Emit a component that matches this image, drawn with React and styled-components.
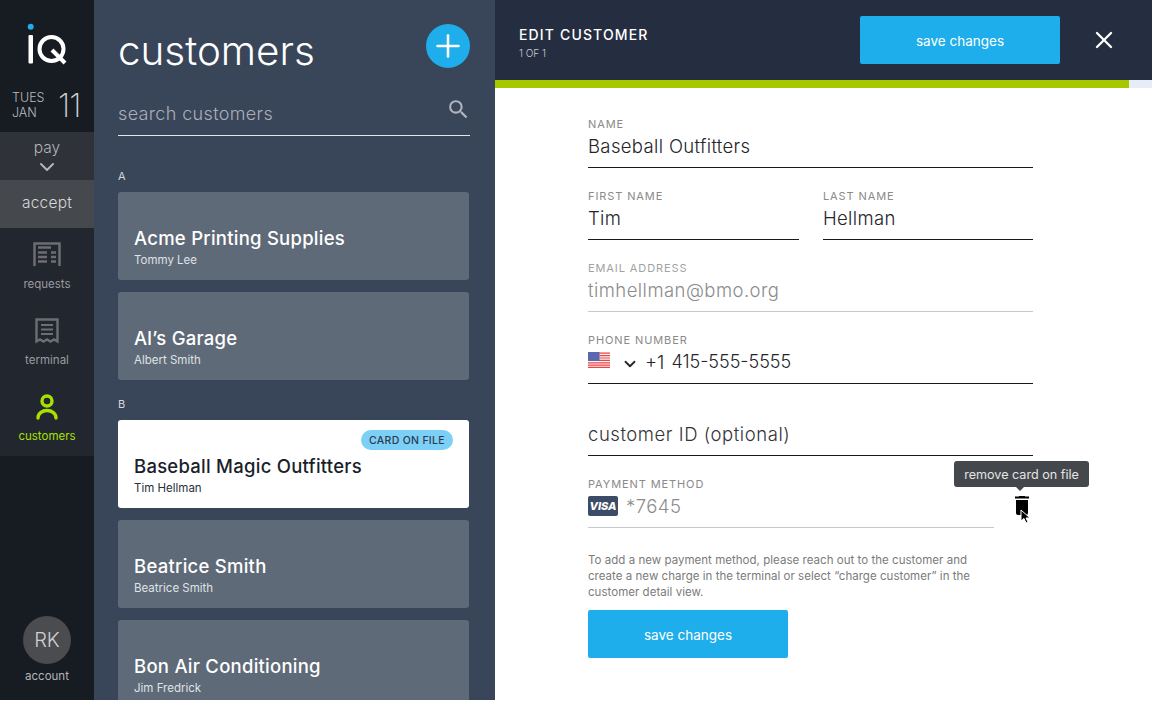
import React from "react"
import styled, { createGlobalStyle } from "styled-components"
import { Plus, X, ChevronDown } from "lucide-react"
import { MdSearch } from "react-icons/md"

const GlobalStyle = createGlobalStyle`
    html, body {
        margin: 0;
        padding: 0;
        background: #fff;
        font-family: "Inter", "Open Sans", sans-serif;
    }
    * { box-sizing: border-box; }
`

const Page = styled.div`
    display: flex;
    width: 1152px;
    height: 700px;
    overflow: hidden;
`

const Sidebar = styled.nav`
    width: 94px;
    flex: none;
    display: flex;
    flex-direction: column;
    background: #171b22;
    color: #b9babd;
`

const LogoBox = styled.div`
    height: 132px;
    display: flex;
    flex-direction: column;
`

const DateRow = styled.div`
    display: flex;
    align-items: center;
    padding: 0 0 0 12px;
    margin-top: 14px;
`

const DateText = styled.div`
    font-size: 12.5px;
    line-height: 15px;
    font-weight: 300;
    width: 46px;
`

const DateNum = styled.div`
    font-size: 32px;
    line-height: 36px;
    font-weight: 200;
    letter-spacing: -1px;
    color: #d0d1d3;
    margin-top: 2px;
`

const PayItem = styled.div`
    height: 48px;
    background: #2f3239;
    text-align: center;
    font-size: 15.5px;
    font-weight: 300;
    line-height: 16px;
    padding-top: 8px;
    color: #b4b5b8;
    svg { display: block; margin: -1px auto 0; }
`

const AcceptItem = styled.div`
    height: 48px;
    background: #45484d;
    display: flex;
    align-items: center;
    justify-content: center;
    font-size: 15.5px;
    letter-spacing: 0.2px;
    font-weight: 300;
    color: #d8d8da;
    padding-bottom: 3px;
`

const NavGroup = styled.div`
    height: 228px;
    background: #22262f;
`

const NavItem = styled.div`
    height: 76px;
    display: flex;
    flex-direction: column;
    align-items: center;
    padding-top: 14px;
    font-size: 11.5px;
    color: ${p => (p.$active ? "#a8e000" : "#9a9b9f")};
    svg { height: 26px; display: block; }
    span { margin-top: 9px; line-height: 14px; }
`

const Account = styled.div`
    margin-top: auto;
    padding-bottom: 17px;
    display: flex;
    flex-direction: column;
    align-items: center;
    font-size: 11.5px;
    color: #b4b5b8;
`

const Avatar = styled.div`
    width: 48px;
    height: 48px;
    border-radius: 50%;
    background: #4a4c50;
    display: flex;
    align-items: center;
    justify-content: center;
    font-size: 20px;
    font-weight: 300;
    color: #cfd0d2;
    margin-bottom: 5px;
`

const ListPanel = styled.section`
    width: 401px;
    flex: none;
    background: #394559;
    padding: 0 25px 0 24px;
    overflow: hidden;
`

const ListHead = styled.div`
    display: flex;
    align-items: flex-start;
    justify-content: space-between;
    height: 80px;
    padding-top: 24px;
`

const Title = styled.h1`
    margin: 0;
    font-size: 40.4px;
    line-height: 54px;
    font-weight: 300;
    color: #fff;
`

const AddButton = styled.button`
    width: 44px;
    height: 44px;
    padding: 0;
    border: 0;
    border-radius: 50%;
    background: #1eaeeb;
    color: #fff;
    display: flex;
    align-items: center;
    justify-content: center;
`

const SearchRow = styled.div`
    height: 56px;
    margin-bottom: 28px;
    display: flex;
    align-items: center;
    justify-content: space-between;
    border-bottom: 1px solid #e4e6ea;
    font-size: 18px;
    letter-spacing: 0.35px;
    font-weight: 300;
    color: #a9afb9;
    padding-top: 12px;
    svg { margin: -8px -1px 0 0; }
`

const SectionLabel = styled.div`
    height: 28px;
    padding-top: 4px;
    font-size: 11px;
    line-height: 16px;
    color: #d4d7dc;
`

const Card = styled.div`
    position: relative;
    width: 351px;
    height: 88px;
    margin-bottom: 12px;
    border-radius: 3px;
    padding: 0 16px 12px;
    display: flex;
    flex-direction: column;
    justify-content: flex-end;
    background: ${p => (p.$selected ? "#fff" : "#5f6a78")};
    color: ${p => (p.$selected ? "#1a1f2b" : "#fff")};
`

const CardName = styled.div`
    font-size: 18.5px;
    letter-spacing: 0.25px;
    line-height: 24px;
    font-weight: 500;
`

const CardSub = styled.div`
    font-size: 11.5px;
    line-height: 16px;
    margin-top: 2px;
    color: ${p => (p.$selected ? "#2a2f3a" : "#dfe2e6")};
`

const Badge = styled.div`
    position: absolute;
    top: 10px;
    right: 16px;
    width: 92px;
    height: 20px;
    border-radius: 10px;
    background: #7dd0f5;
    color: #2a3a50;
    font-size: 10.5px;
    font-weight: 500;
    letter-spacing: 0.3px;
    display: flex;
    align-items: center;
    justify-content: center;
`

const Detail = styled.main`
    flex: 1;
    background: #fff;
    min-width: 0;
`

const DetailHead = styled.header`
    height: 80px;
    background: #252e40;
    display: flex;
    align-items: center;
    padding: 0 40px 0 24px;
    color: #fff;
`

const HeadText = styled.div`
    margin-right: auto;
    margin-top: 5px;
`

const HeadTitle = styled.div`
    font-size: 14px;
    line-height: 16px;
    font-weight: 500;
    letter-spacing: 1.15px;
`

const HeadSub = styled.div`
    font-size: 10px;
    line-height: 12px;
    margin-top: 4px;
    font-weight: 300;
    color: #c9ccd2;
`

const SaveButton = styled.button`
    width: 200px;
    height: 48px;
    border: 0;
    border-radius: 2px;
    background: #1eaeeb;
    color: #fff;
    font-family: inherit;
    font-size: 13.5px;
    padding: 2px 0 0;
`

const CloseButton = styled.button`
    width: 16px;
    height: 16px;
    margin-left: 36px;
    padding: 0;
    border: 0;
    background: none;
    color: #fff;
    display: flex;
    align-items: center;
    justify-content: center;
    svg { flex: none; }
`

const Progress = styled.div`
    height: 8px;
    background: #e6edf9;
`

const ProgressFill = styled.div`
    height: 100%;
    background: #a6c800;
`

const Form = styled.form`
    width: 445px;
    margin-left: 93px;
    padding-top: 29px;
    display: flex;
    flex-direction: column;
    gap: 21px;
`

const Field = styled.div`
    min-width: 0;
    height: 51px;
    border-bottom: 1px solid ${p => (p.$muted ? "#c9c9c9" : "#1a1a1a")};
`

const Label = styled.div`
    height: 15px;
    font-size: 11px;
    line-height: 14px;
    letter-spacing: 0.9px;
    color: ${p => (p.$muted ? "#a2a2a2" : "#8a8a8a")};
    margin-bottom: 2px;
`

const Value = styled.div`
    height: 24px;
    display: flex;
    align-items: center;
    font-size: 18.5px;
    letter-spacing: ${p => (p.$hint ? "0.55px" : p.$muted ? "0.45px" : "0.35px")};
    font-weight: ${p => (p.$muted || p.$hint ? 300 : 350)};
    line-height: 24px;
    color: ${p => (p.$muted ? "#8c8c8c" : p.$hint ? "#33353a" : "#23252a")};
`

const TwoCols = styled.div`
    display: grid;
    grid-template-columns: 211px 210px;
    gap: 24px;
`

const Flag = styled.svg`
    width: 22px;
    height: 16px;
    margin-top: -4px;
    margin-right: 11px;
`

const DialCode = styled.span`
    font-weight: 300;
    margin-right: 7px;
    margin-left: 6px;
    letter-spacing: 0;
`

const PhoneNumber = styled.span`
    font-size: 18px;
    letter-spacing: 0;
`

const PaymentRow = styled.div`
    display: flex;
    align-items: flex-start;
`

const PaymentField = styled(Field)`
    width: 406px;
`

const VisaBadge = styled.span`
    width: 30px;
    height: 20px;
    margin-right: 8px;
    border-radius: 2px;
    background: #3d4c66;
    color: #fff;
    font-size: 11px;
    letter-spacing: 0;
    font-weight: 800;
    font-style: italic;
    display: flex;
    align-items: center;
    justify-content: center;
`

const TrashAction = styled.div`
    position: relative;
    width: 14px;
    margin-left: 21px;
    margin-top: 19px;
`

const Tooltip = styled.div`
    position: absolute;
    left: -61px;
    top: -35px;
    width: 135px;
    height: 26px;
    border-radius: 3px;
    background: #44474c;
    color: #e4e4e4;
    font-size: 12.6px;
    white-space: nowrap;
    display: flex;
    align-items: center;
    justify-content: center;
    &::after {
        content: "";
        position: absolute;
        left: 62px;
        bottom: -4px;
        border-left: 4px solid transparent;
        border-right: 4px solid transparent;
        border-top: 4px solid #44474c;
    }
`

const Pointer = styled.svg`
    position: absolute;
    left: 5px;
    top: 13px;
    width: 12px;
    height: 16px;
`

const Note = styled.p`
    margin: 3px 0 0;
    width: 395px;
    font-size: 11.5px;
    letter-spacing: 0.03px;
    line-height: 16px;
    color: #7b7b7b;
`

const BottomSave = styled(SaveButton)`
    margin-top: -11px;
`

const Logo = () => (
    <svg width="94" height="72" viewBox="0 0 94 72" fill="none">
        <circle cx="30.7" cy="26.7" r="3" fill="#1eaeeb" />
        <rect x="28.5" y="35" width="4.5" height="28.5" rx="1" fill="#fff" />
        <circle cx="51.5" cy="49" r="12" stroke="#fff" strokeWidth="4" />
        <path d="M52 50 L65 63" stroke="#fff" strokeWidth="4" />
    </svg>
)

const RequestsIcon = () => (
    <svg width="28" height="26" viewBox="0 0 28 26" fill="none" stroke="#6c6e73">
        <path d="M1.5 24V1.5h25V24" strokeWidth="2.5" />
        <path d="M5 5.5h13M5 10.5h9M5 15h9M5 19.5h9M18 10.5h5M18 15h5M18 19.5h5" strokeWidth="2.4" />
    </svg>
)

const TerminalIcon = () => (
    <svg width="24" height="26" viewBox="0 0 24 26" fill="none" stroke="#6c6e73">
        <path d="M1.5 23.5V1.5h21v22l-3.5-2-3.5 2-3.5-2-3.5 2-3.5-2z" strokeWidth="2.4" />
        <path d="M6 7h12M6 11.5h12M6 16h12" strokeWidth="2.2" />
    </svg>
)

const CustomersIcon = () => (
    <svg width="24" height="26" viewBox="0 0 24 26" fill="none" stroke="#a8e000">
        <circle cx="12" cy="7" r="5" strokeWidth="3.4" />
        <path d="M3 24c0-4.5 4-7.5 9-7.5s9 3 9 7.5" strokeWidth="3.4" strokeLinecap="round" />
    </svg>
)

const UsFlag = () => (
    <Flag viewBox="0 0 22 16">
        <rect width="22" height="16" fill="#f7f7f7" />
        <path d="M0 1.2h22M0 3.6h22M0 6h22M0 8.4h22M0 10.8h22M0 13.2h22M0 15.4h22" stroke="#ee4444" strokeWidth="1.2" />
        <rect width="11.5" height="9" fill="#5a68b0" />
    </Flag>
)

const TrashIcon = () => (
    <svg width="14" height="20" viewBox="0 0 14 20" fill="#000" style={{ display: "block" }}>
        <rect x="0" y="0.5" width="14" height="2" />
        <rect x="4" y="0" width="6" height="1" />
        <path d="M1 4h12v13a2 2 0 0 1-2 2H3a2 2 0 0 1-2-2z" />
    </svg>
)

const groups = [
    {
        letter: "A",
        items: [
            { name: "Acme Printing Supplies", contact: "Tommy Lee" },
            { name: "Al’s Garage", contact: "Albert Smith" },
        ],
    },
    {
        letter: "B",
        items: [
            { name: "Baseball Magic Outfitters", contact: "Tim Hellman", selected: true },
            { name: "Beatrice Smith", contact: "Beatrice Smith" },
            { name: "Bon Air Conditioning", contact: "Jim Fredrick" },
        ],
    },
]

export default function App() {
    return (
        <Page>
            <GlobalStyle />
            <Sidebar>
                <LogoBox>
                    <Logo />
                    <DateRow>
                        <DateText>
                            TUES
                            <br />
                            JAN
                        </DateText>
                        <DateNum>11</DateNum>
                    </DateRow>
                </LogoBox>
                <PayItem>
                    pay
                    <ChevronDown size={24} strokeWidth={2} color="#b4b5b8" />
                </PayItem>
                <AcceptItem>accept</AcceptItem>
                <NavGroup>
                    <NavItem>
                        <RequestsIcon />
                        <span>requests</span>
                    </NavItem>
                    <NavItem>
                        <TerminalIcon />
                        <span>terminal</span>
                    </NavItem>
                    <NavItem $active>
                        <CustomersIcon />
                        <span>customers</span>
                    </NavItem>
                </NavGroup>
                <Account>
                    <Avatar>RK</Avatar>
                    account
                </Account>
            </Sidebar>

            <ListPanel>
                <ListHead>
                    <Title>customers</Title>
                    <AddButton>
                        <Plus size={36} strokeWidth={1.7} />
                    </AddButton>
                </ListHead>
                <SearchRow>
                    search customers
                    <MdSearch size={25} color="#b0b5bd" />
                </SearchRow>
                {groups.map(group => (
                    <div key={group.letter}>
                        <SectionLabel>{group.letter}</SectionLabel>
                        {group.items.map(item => (
                            <Card key={item.name} $selected={item.selected}>
                                {item.selected && <Badge>CARD ON FILE</Badge>}
                                <CardName>{item.name}</CardName>
                                <CardSub $selected={item.selected}>{item.contact}</CardSub>
                            </Card>
                        ))}
                    </div>
                ))}
            </ListPanel>

            <Detail>
                <DetailHead>
                    <HeadText>
                        <HeadTitle>EDIT CUSTOMER</HeadTitle>
                        <HeadSub>1 OF 1</HeadSub>
                    </HeadText>
                    <SaveButton type="button">save changes</SaveButton>
                    <CloseButton type="button">
                        <X size={28} strokeWidth={2} />
                    </CloseButton>
                </DetailHead>
                <Progress>
                    <ProgressFill style={{ width: "96.5%" }} />
                </Progress>
                <Form>
                    <Field>
                        <Label>NAME</Label>
                        <Value>Baseball Outfitters</Value>
                    </Field>
                    <TwoCols>
                        <Field>
                            <Label>FIRST NAME</Label>
                            <Value>Tim</Value>
                        </Field>
                        <Field>
                            <Label>LAST NAME</Label>
                            <Value>Hellman</Value>
                        </Field>
                    </TwoCols>
                    <Field $muted>
                        <Label $muted>EMAIL ADDRESS</Label>
                        <Value $muted>timhellman@bmo.org</Value>
                    </Field>
                    <Field>
                        <Label>PHONE NUMBER</Label>
                        <Value>
                            <UsFlag />
                            <ChevronDown size={18} strokeWidth={2.4} style={{ marginTop: 3 }} />
                            <DialCode>+1</DialCode>
                            <PhoneNumber>415-555-5555</PhoneNumber>
                        </Value>
                    </Field>
                    <Field>
                        <Label />
                        <Value $hint>customer ID (optional)</Value>
                    </Field>
                    <PaymentRow>
                        <PaymentField $muted>
                            <Label>PAYMENT METHOD</Label>
                            <Value $muted>
                                <VisaBadge>VISA</VisaBadge>
                                *7645
                            </Value>
                        </PaymentField>
                        <TrashAction>
                            <Tooltip>remove card on file</Tooltip>
                            <TrashIcon />
                            <Pointer viewBox="0 0 12 16">
                                <path d="M1 1v11l3-2.5 2 4.5 2-1-2-4h4z" fill="#000" stroke="#fff" strokeWidth="1" />
                            </Pointer>
                        </TrashAction>
                    </PaymentRow>
                    <Note>
                        To add a new payment method, please reach out to the customer and create a new charge in the
                        terminal or select “charge customer” in the customer detail view.
                    </Note>
                    <BottomSave type="button">save changes</BottomSave>
                </Form>
            </Detail>
        </Page>
    )
}
